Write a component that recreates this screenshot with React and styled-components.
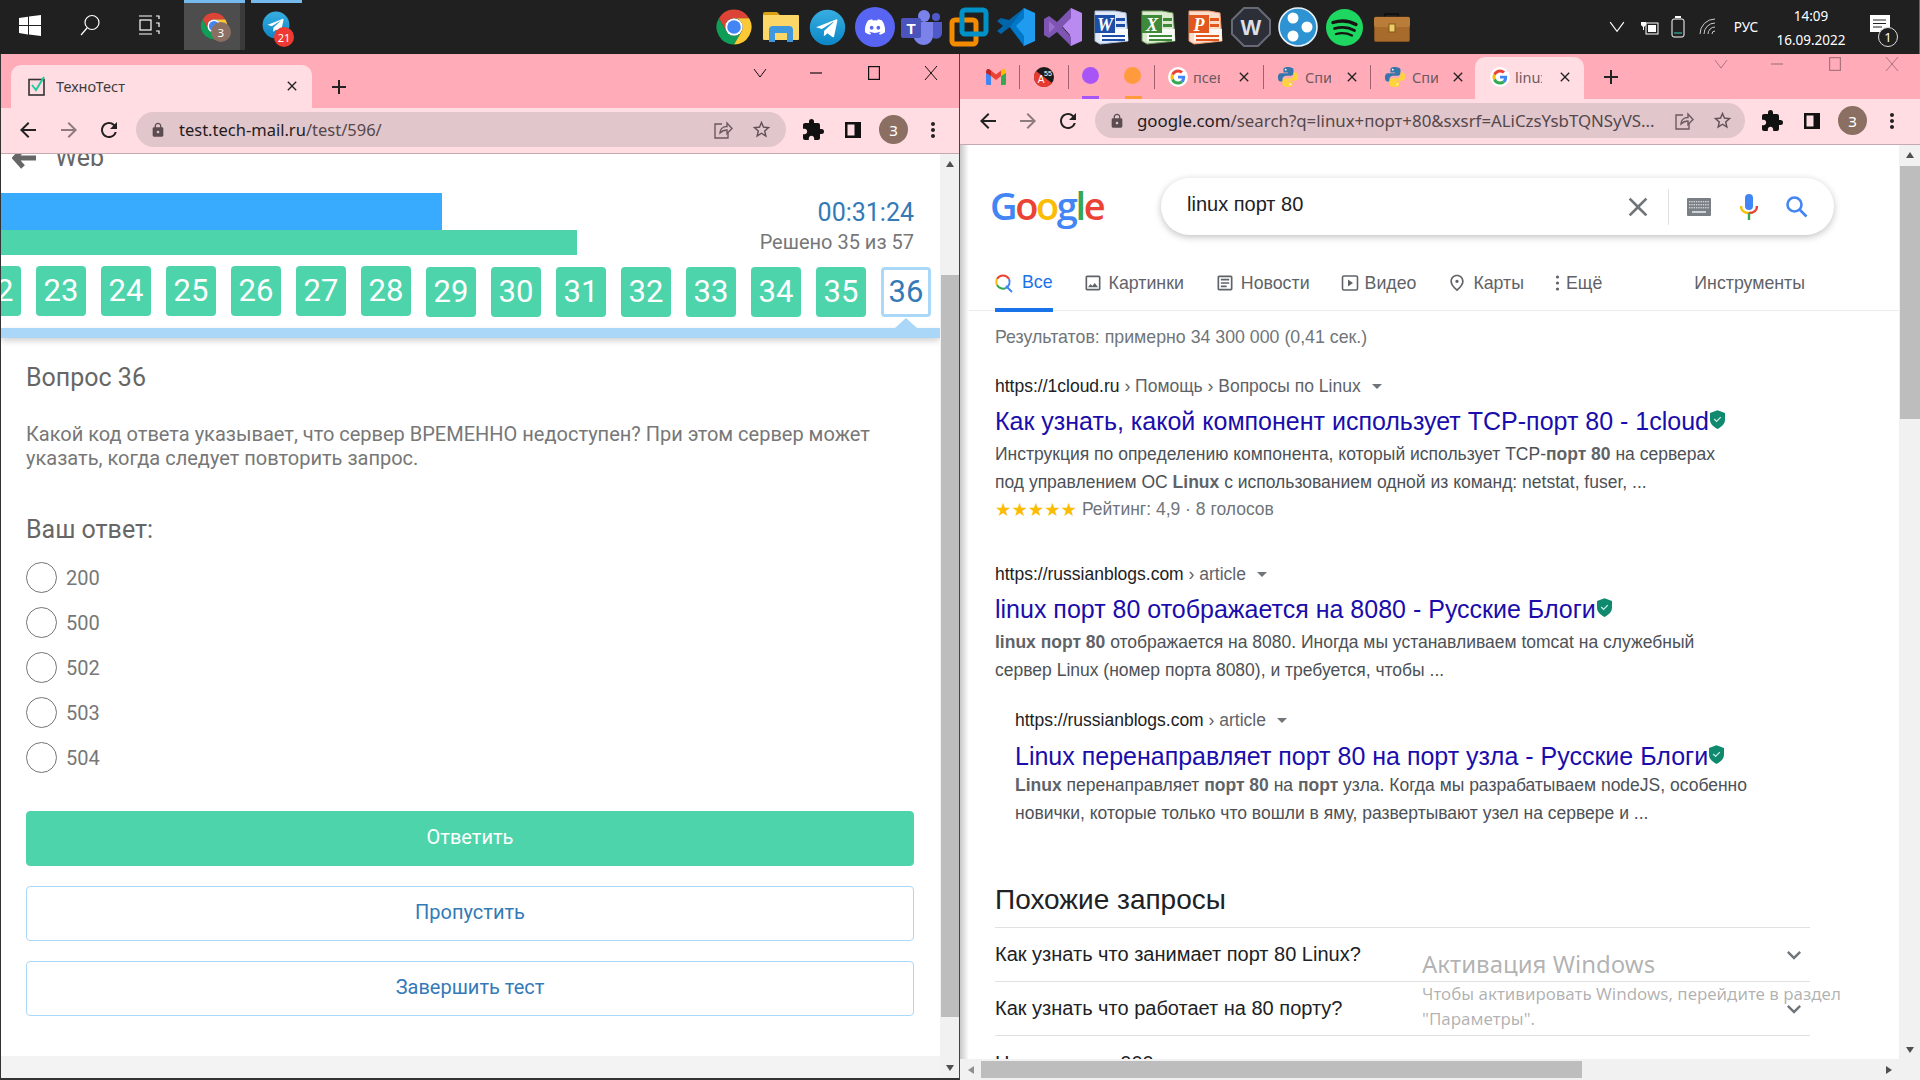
import React from 'react';
import styled, { createGlobalStyle } from 'styled-components';
import { MdArrowBack, MdArrowForward, MdRefresh, MdExtension, MdLock, MdMoreVert, MdClose, MdAdd, MdStarBorder, MdExpandMore, MdOutlineImage, MdOutlineArticle, MdOutlinePlace } from 'react-icons/md';
import { FaDiscord } from 'react-icons/fa';

const Global = createGlobalStyle`
  html, body { margin: 0; padding: 0; background: #fff; }
  * { box-sizing: border-box; }
`;
const UI = `"Noto Sans", "Open Sans", sans-serif`;
const ROBOTO = `Roboto, "Noto Sans", sans-serif`;
const ARIAL = `"Liberation Sans", Arial, sans-serif`;

const Page = styled.div`position: relative; width: 1920px; height: 1080px; overflow: hidden; display: flex; flex-direction: column; background: #fff;`;

/* ---------- taskbar ---------- */
const Taskbar = styled.div`height: 54px; flex: none; background: #202020; display: flex; color: #fff; font-family: ${UI};`;
const SysButton = styled.div`width: 60px; height: 54px; flex: none; display: flex; align-items: center; justify-content: center; padding-bottom: 4px;`;
const RunSlot = styled.div`
  position: relative; flex: none; height: 50px; width: ${p => p.$w}px; margin-left: ${p => p.$ml || 0}px;
  border-top: 3px solid #76b9ed; display: flex;
`;
const RunFace = styled.div`position: relative; width: ${p => p.$w}px; height: 47px; background: ${p => p.$active ? '#4d4d4d' : 'transparent'};`;
const RunRest = styled.div`flex: 1; background: #3a3a3a;`;
const RunIcon = styled.div`position: absolute; left: ${p => p.$l}px; top: 8px; width: 28px; height: 28px;`;
const Badge = styled.div`
  position: absolute; left: ${p => p.$l}px; top: ${p => p.$t}px; width: ${p => p.$s}px; height: ${p => p.$s}px; border-radius: 50%;
  background: ${p => p.$bg}; color: #fff; font: 11px ${UI}; display: flex; align-items: center; justify-content: center;
`;
const PinRow = styled.div`margin-left: 408px; display: flex; flex: none;`;
const Pin = styled.div`width: 47px; height: 54px; display: flex; align-items: center; justify-content: center;`;
const Tray = styled.div`flex: 1; display: flex; align-items: center; padding-left: 184px; border-right: 1px solid #666;`;
const TrayItem = styled.div`flex: none; width: ${p => p.$w}px; display: flex; justify-content: center; align-items: center; font-size: ${p => p.$fs || 14}px; line-height: 24px; text-align: center; flex-direction: column; padding-top: ${p => p.$pt || 0}px;`;
const NotifyWrap = styled.div`position: relative; width: 20px; height: 17px; margin-bottom: 8px;`;
const NotifyBadge = styled.div`position: absolute; left: 8px; top: 12px; width: 20px; height: 20px; border-radius: 50%; border: 1px solid #ddd; background: #202020; color: #fff; font-size: 13px; display: flex; align-items: center; justify-content: center;`;

/* ---------- windows ---------- */
const Windows = styled.div`flex: 1; min-height: 0; display: flex;`;
const Win = styled.div`width: 960px; flex: none; display: flex; flex-direction: column; min-height: 0; ${p => p.$framed && 'border-left: 1px solid #333; border-right: 1px solid #444; border-bottom: 2px solid #333;'}`;
const TabStrip = styled.div`height: ${p => p.$h}px; flex: none; background: #ffabb8; display: flex; align-items: flex-end; padding-left: ${p => p.$pl}px; position: relative; font-family: ${UI};`;
const ActiveTab = styled.div`
  position: relative; width: ${p => p.$w}px; height: ${p => p.$h}px; flex: none; background: #ffdde3; border-radius: 10px 10px 0 0;
  display: flex; align-items: center; padding: 0 0 2px ${p => p.$pl}px;
`;
const InactiveTab = styled.div`width: ${p => p.$w}px; height: 36px; flex: none; align-self: flex-end; margin-bottom: 4px; display: flex; align-items: center; padding-left: ${p => p.$pl || 14}px;`;
const TabTitle = styled.span`flex: ${p => p.$w ? 'none' : 1}; width: ${p => p.$w ? p.$w + 'px' : 'auto'}; min-width: 0; margin-left: ${p => p.$ml}px; font-size: 14.5px; color: ${p => p.$dim ? '#6d5a60' : '#3c3c3c'}; white-space: nowrap; overflow: hidden;`;
const TabClose = styled.div`flex: none; margin-left: auto; width: 16px; height: 16px; display: flex; align-items: center; justify-content: center; color: #222; margin-right: ${p => p.$mr}px; font-size: 16px;`;
const TabSep = styled.div`width: 1px; height: 24px; margin-bottom: 10px; flex: none; background: #a0616e;`;
const PinSlot = styled.div`position: relative; width: ${p => p.$w}px; height: 45px; flex: none; display: flex; align-items: center; justify-content: center;`;
const Dot = styled.div`position: relative; width: 17px; height: 17px; border-radius: 50%; background: ${p => p.$c}; margin-bottom: 2px;`;
const DotBar = styled.div`position: absolute; left: 50%; margin-left: -8px; bottom: 0; width: 17px; height: 3px; background: ${p => p.$c};`;
const NewTab = styled.div`width: 24px; height: 24px; margin-left: ${p => p.$ml}px; margin-bottom: ${p => p.$mb}px; flex: none; color: #222; font-size: 24px; display: flex; align-items: center; justify-content: center;`;
const Controls = styled.div`position: absolute; right: 0; top: ${p => p.$t}px; display: flex; align-items: center; opacity: ${p => p.$faded ? .35 : 1}; color: #111;`;
const Ctl = styled.div`width: ${p => p.$w}px; height: 20px; display: flex; align-items: center; justify-content: center;`;

const Toolbar = styled.div`height: 46px; flex: none; background: #ffdde3; border-bottom: 1px solid #c9a9b0; display: flex; align-items: center; padding-bottom: 2px; font-family: ${UI};`;
const NavBtn = styled.div`flex: none; width: ${p => p.$w}px; display: flex; align-items: center; justify-content: center; color: ${p => p.$dim ? '#8d7b80' : '#222'}; font-size: 24px;`;
const Omni = styled.div`flex: none; width: 650px; height: 35px; margin-left: ${p => p.$ml}px; border-radius: 18px; background: #e1c6cb; display: flex; align-items: center; padding: 0 ${p => p.$pr}px 0 14px; color: #5a4c50;`;
const Url = styled.div`flex: 1; min-width: 0; margin-left: ${p => p.$ml}px; font-size: ${p => p.$fs}px; white-space: nowrap; overflow: hidden; color: #54484b; b { font-weight: 400; color: #1f1b1c; }`;
const OmniIcon = styled.div`flex: none; width: 39px; display: flex; justify-content: center; font-size: 21px; color: #5f5053;`;
const Avatar = styled.div`flex: none; width: 29px; height: 29px; border-radius: 50%; background: #8a6f62; color: #fff; font-size: 15px; display: flex; align-items: center; justify-content: center;`;

/* ---------- viewport / scrollbars ---------- */
const Viewport = styled.div`flex: 1; min-height: 0; display: grid; grid-template-columns: minmax(0, 1fr) ${p => p.$sb}px; grid-template-rows: ${p => p.$hb ? 'minmax(0, 1fr) 21px' : 'minmax(0, 1fr)'};`;
const Scroll = styled.div`grid-column: 2; background: #f1f1f1; display: flex; flex-direction: column; align-items: stretch; min-height: 0; color: #505050; ${p => p.$tall && 'grid-row: 1 / span 2;'}`;
const Thumb = styled.div`flex: none; background: #bdbdbd; height: ${p => p.$h}px; margin-top: ${p => p.$mt}px; margin-left: 1px;`;
const Arrow = styled.div`flex: none; height: 20px; display: flex; align-items: center; justify-content: center; margin-top: ${p => p.$auto ? 'auto' : 0};`;
const Tri = styled.div`width: 0; height: 0; border-left: 4px solid transparent; border-right: 4px solid transparent; ${p => p.$up ? 'border-bottom: 6px solid #505050;' : 'border-top: 6px solid #505050;'}`;
const HScroll = styled.div`grid-column: 1; grid-row: 2; background: #f1f1f1; display: flex; align-items: center;`;
const HArrow = styled.div`flex: none; width: 21px; display: flex; justify-content: center; margin-left: ${p => p.$end ? 'auto' : 0};`;
const HTri = styled.div`width: 0; height: 0; border-top: 4px solid transparent; border-bottom: 4px solid transparent; ${p => p.$left ? 'border-right: 6px solid #909090;' : 'border-left: 6px solid #505050;'}`;
const HThumb = styled.div`flex: none; width: 601px; height: 17px; background: #bdbdbd;`;

/* ---------- test page ---------- */
const TestMain = styled.div`grid-column: 1; min-height: 0; overflow: hidden; display: flex; flex-direction: column; font-family: ${ROBOTO};`;
const BackRow = styled.div`height: 30px; margin-top: -11px; margin-left: 11px; display: flex; align-items: center; gap: 19px; flex: none; color: #666; font-size: 25px; line-height: 30px;`;
const ProgressWrap = styled.div`margin-top: 20px; display: grid; flex: none;`;
const Bars = styled.div`grid-area: 1 / 1; display: flex; flex-direction: column;`;
const Bar = styled.div`height: ${p => p.$h}px; background: ${p => p.$c};`;
const Stats = styled.div`grid-area: 1 / 1; padding: 5px 26px 0 0; display: flex; flex-direction: column; align-items: flex-end;`;
const Timer = styled.div`font-size: 25px; line-height: 30px; color: #337ab7;`;
const Solved = styled.div`font-size: 20px; line-height: 27px; padding-top: 1px; height: 27px; color: #777;`;
const TileRow = styled.div`margin: 11px 0 0 -30px; display: flex; gap: 15px; height: 51px; flex: none; align-items: flex-start;`;
const Tile = styled.div`
  flex: none; width: 50px; height: 50px; border-radius: 4px; font-size: 31px; display: flex; align-items: center; justify-content: center; padding-bottom: 2px;
  margin-top: ${p => p.$up ? 0 : 1}px;
  background: ${p => p.$current ? '#fff' : '#4dd4ab'}; color: ${p => p.$current ? '#337ab7' : '#fff'};
  border: ${p => p.$current ? '3px solid #a9d8f8' : 'none'};
`;
const Strip = styled.div`position: relative; margin-top: 11px; height: 10px; flex: none; background: #aad7f7; box-shadow: 0 3px 6px rgba(0,0,0,.18);`;
const Caret = styled.div`position: absolute; left: 894px; top: -10px; width: 0; height: 0; border-left: 11px solid transparent; border-right: 11px solid transparent; border-bottom: 10px solid #aad7f7;`;
const Body = styled.div`padding: 0 26px 0 25px; display: flex; flex-direction: column; flex: none;`;
const QTitle = styled.div`margin-top: 25px; font-size: 25px; line-height: 30px; color: #666;`;
const QText = styled.div`margin-top: 29px; font-size: 20px; line-height: 24px; color: #777;`;
const AnswerLabel = styled.div`margin-top: 45px; font-size: 25px; line-height: 30px; color: #666;`;
const Options = styled.div`margin-top: 17px; display: flex; flex-direction: column; gap: 14px;`;
const Option = styled.div`height: 31px; display: flex; align-items: center; gap: 9px; font-size: 20px; color: #777;`;
const Radio = styled.div`width: 31px; height: 31px; border-radius: 50%; border: 1px solid #767676; background: #fff; flex: none;`;
const Buttons = styled.div`margin-top: 38px; display: flex; flex-direction: column; gap: 20px;`;
const Btn = styled.div`
  height: 55px; border-radius: 4px; display: flex; align-items: center; justify-content: center; font-size: 20px; padding-bottom: 4px;
  background: ${p => p.$primary ? '#4dd4ab' : '#fff'}; color: ${p => p.$primary ? '#fff' : '#337ab7'};
  border: 1px solid ${p => p.$primary ? '#4dd4ab' : '#a9d8f8'};
`;
const BottomTrack = styled.div`margin-top: auto; height: 22px; flex: none; background: #f3f3f3;`;

/* ---------- google page ---------- */
const GMain = styled.div`grid-column: 1; grid-row: 1; position: relative; min-height: 0; overflow: hidden; display: flex; flex-direction: column; font-family: ${ARIAL}; background: #fff;`;
const EdgeShade = styled.div`position: absolute; left: 0; top: 0; bottom: 0; width: 9px; background: linear-gradient(90deg, #c8c8c8, #fff);`;
const SearchHead = styled.div`display: flex; padding: 33px 0 0 31px; flex: none;`;
const Logo = styled.div`width: 170px; flex: none; height: 57px; font-family: "Open Sans", ${ARIAL}; font-size: 38px; letter-spacing: -2.4px; line-height: 55px; font-weight: 600; margin-left: -1px;`;
const L = styled.span`color: ${p => p.$c};`;
const SearchBox = styled.div`width: 673px; height: 57px; border-radius: 29px; background: #fff; box-shadow: 0 2px 7px rgba(32,33,36,.28); display: flex; align-items: center; padding-left: 26px; flex: none; margin-left: 1px;`;
const Query = styled.div`flex: 1; font-size: 20px; color: #202124; padding-bottom: 4px;`;
const BoxIcon = styled.div`flex: none; width: ${p => p.$w}px; display: flex; justify-content: center; align-items: center; color: ${p => p.$c || '#70757a'};`;
const BoxDivider = styled.div`flex: none; width: 1px; height: 36px; background: #dfe1e5; margin: 0 11px 0 14px;`;
const TabsRow = styled.div`height: 54px; margin-top: 22px; padding-left: 35px; border-bottom: 1px solid #ebebeb; display: flex; flex: none; font-size: 17.75px; color: #5f6368;`;
const GTab = styled.div`display: flex; align-items: center; gap: ${p => p.$gap || 6}px; margin-right: ${p => p.$mr || 31}px; height: 54px; padding-bottom: 2px; ${p => p.$active && 'color: #1a73e8; border-bottom: 4px solid #1a73e8; padding-bottom: 0; height: 55px;'}`;
const Results = styled.div`padding-left: 35px; display: flex; flex-direction: column;`;
const ResStats = styled.div`margin-top: 16px; height: 20px; line-height: 20px; font-size: 17.75px; color: #70757a;`;
const ResItem = styled.div`margin-top: ${p => p.$mt}px; padding-left: ${p => p.$in || 0}px;`;
const Cite = styled.div`height: 22px; line-height: 22px; font-size: 17.5px; color: #202124; display: flex; align-items: center; span { color: #5f6368; }`;
const CiteTri = styled.div`width: 0; height: 0; margin-left: 11px; border-left: 5px solid transparent; border-right: 5px solid transparent; border-top: 5px solid #70757a;`;
const ResTitle = styled.div`margin-top: ${p => p.$mt}px; height: 30px; line-height: 30px; font-size: 25px; color: #1a0dab; display: flex; align-items: center; white-space: nowrap;`;
const Shield = styled.span`flex: none; display: flex; margin: -3px 0 0 1px;`;
const Snippet = styled.div`margin-top: ${p => p.$mt}px; font-size: 17.5px; line-height: 28px; color: #4d5156; white-space: nowrap; b { font-weight: 700; color: #5f6368; }`;
const Rating = styled.div`height: 26px; font-size: 17.5px; color: #70757a; display: flex; align-items: center; gap: 5px;`;
const Stars = styled.span`color: #fbbc04; font-size: 18.3px; font-family: "DejaVu Sans", sans-serif;`;
const Related = styled.div`margin-top: 55px; height: 36px; line-height: 36px; font-size: 28px; color: #202124;`;
const RelList = styled.div`margin-top: 9px; width: 815px;`;
const RelRow = styled.div`height: 54px; border-top: 1px solid #dfe1e5; display: flex; align-items: center; justify-content: space-between; font-size: 20px; color: #202124; padding: ${p => p.$clipped ? 2 : 0}px 2px 0 0;`;
const Activation = styled.div`position: absolute; left: 1422px; top: 946px; width: 480px; color: rgba(70,70,70,.42); font-family: ${UI}; pointer-events: none;`;
const ActTitle = styled.div`font-size: 24px; line-height: 35px;`;
const ActText = styled.div`font-size: 16.95px; line-height: 25px;`;

/* ---------- drawings ---------- */
const ChromeIcon = ({ s = 40 }) => (
  <svg width={s} height={s} viewBox="0 0 48 48">
    <path fill="#db4437" d="M5.81 13.5A21 21 0 0 1 42.19 13.5H24A10.5 10.5 0 0 0 14.9 29.25Z" />
    <path fill="#0f9d58" d="M5.81 13.5L14.9 29.25A10.5 10.5 0 0 0 33.1 29.25L24 45A21 21 0 0 1 5.81 13.5Z" />
    <path fill="#fcc934" d="M42.19 13.5A21 21 0 0 1 24 45L33.1 29.25A10.5 10.5 0 0 0 24 13.5Z" />
    <circle cx="24" cy="24" r="10.5" fill="#fff" /><circle cx="24" cy="24" r="8.2" fill="#4285f4" />
  </svg>
);
const Telegram = ({ s = 37 }) => (
  <svg width={s} height={s} viewBox="0 0 48 48">
    <defs><linearGradient id="tg" x1="0" y1="0" x2="0" y2="1"><stop offset="0" stopColor="#37aee2" /><stop offset="1" stopColor="#0c87c5" /></linearGradient></defs>
    <circle cx="24" cy="24" r="23" fill="url(#tg)" />
    <path fill="#fff" d="M10 23.5L35 13.5c1.2-.4 2.1.3 1.8 1.8l-4.2 20c-.3 1.3-1.2 1.6-2.2 1l-6.5-4.8-3.2 3c-.4.4-.9.7-1.5.6l.5-6.8 12.2-11c.5-.5-.1-.8-.8-.3L16.8 26l-6.5-2c-1.3-.4-1.3-.4-.3-.5z" />
  </svg>
);
const Folder = () => (
  <svg width="36" height="32" viewBox="0 0 36 32">
    <path fill="#d9a015" d="M0 3a2 2 0 0 1 2-2h12l4 4v3H0z" />
    <rect y="4" width="36" height="25" rx="1" fill="#fcd667" />
    <path fill="#3f97dd" d="M6 31V19a4 4 0 0 1 4-4h16a4 4 0 0 1 4 4v12h-6v-9H12v9z" />
  </svg>
);
const Discord = () => (
  <svg width="40" height="40" viewBox="0 0 40 40"><circle cx="20" cy="20" r="20" fill="#5865f2" /><g transform="translate(9 9)"><FaDiscord size={22} color="#fff" /></g></svg>
);
const Teams = () => (
  <svg width="41" height="36" viewBox="0 0 41 36">
    <circle cx="23" cy="7" r="6" fill="#7b83eb" /><circle cx="35" cy="8" r="4" fill="#5059c9" />
    <path fill="#5059c9" d="M28 13h13v11a6 6 0 0 1-9 5z" />
    <path fill="#7b83eb" d="M12 13h20v14a9 9 0 0 1-9 9 11 11 0 0 1-11-11z" />
    <rect y="9" width="20" height="20" rx="2" fill="#4b53bc" />
    <text x="10" y="25" fontFamily="Liberation Sans" fontSize="15" fontWeight="700" fill="#fff" textAnchor="middle">T</text>
  </svg>
);
const Vmware = () => (
  <svg width="40" height="40" viewBox="0 0 40 40" fill="none">
    <rect x="3" y="13" width="24" height="24" rx="3" stroke="#f38b00" strokeWidth="5" />
    <rect x="13" y="3" width="24" height="24" rx="3" stroke="#0091c8" strokeWidth="5" />
  </svg>
);
const VSCode = () => (
  <svg width="40" height="40" viewBox="0 0 40 40">
    <path fill="#1f9cf0" d="M28 1l11 5v28l-11 5-1-1V28L13 19l14-10V2z" />
    <path fill="#0078c9" d="M28 1L13 19l15 20 0-10-8-10 8-8z" />
    <path fill="#0065a9" d="M1 24l4 3 10-8 13-18L13 13 5 11l-4 3 6 5z" />
  </svg>
);
const VStudio = () => (
  <svg width="40" height="40" viewBox="0 0 40 40">
    <path fill="#b98aef" d="M28 1l11 5v28l-11 5-1-1V28l-8-9 8-9z" />
    <path fill="#7f55b3" d="M28 1L14 15 6 9l-5 3v16l5 3 8-6 14 14 0-9-9-10 9-9z" />
    <path fill="#9a6fd0" d="M6 14l6 6-6 6z" />
  </svg>
);
const OfficeDoc = ({ bg, stroke, letter, fg }) => (
  <svg width="40" height="40" viewBox="0 0 40 40">
    <path fill={bg} stroke={stroke} d="M5 4h20l11 2 2 28-28 3-5-3z" />
    <path fill="#fff" opacity=".8" d="M10 34l28 0 0-12-28 0z" />
    <rect x="5" y="8" width="20" height="18" fill={fg} />
    <text x="15" y="24" fontFamily="Liberation Serif" fontSize="18" fontWeight="700" fontStyle="italic" fill="#fff" textAnchor="middle">{letter}</text>
    <g fill={fg}><rect x="26" y="11" width="9" height="3" /><rect x="26" y="17" width="9" height="3" /><rect x="12" y="28" width="23" height="2" /><rect x="12" y="32" width="23" height="2" /></g>
  </svg>
);
const WShield = () => (
  <svg width="40" height="40" viewBox="0 0 40 40">
    <path fill="#2c2f38" stroke="#666a75" strokeWidth="2" d="M13 1h14l12 12v14L27 39H13L1 27V13z" />
    <text x="20" y="28" fontFamily="Liberation Sans" fontSize="22" fontWeight="700" fill="#dcdfe5" textAnchor="middle">W</text>
  </svg>
);
const BlueDots = () => (
  <svg width="40" height="40" viewBox="0 0 40 40">
    <circle cx="20" cy="20" r="19" fill="#2d93d3" stroke="#e7f3fb" strokeWidth="1.6" />
    <circle cx="15" cy="11" r="5.5" fill="#fff" /><circle cx="29" cy="20" r="5.5" fill="#fff" /><circle cx="15" cy="29" r="5.5" fill="#fff" />
  </svg>
);
const Spotify = () => (
  <svg width="37" height="37" viewBox="0 0 37 37" fill="none">
    <circle cx="18.5" cy="18.5" r="18.5" fill="#1ed760" />
    <path stroke="#191414" strokeLinecap="round" strokeWidth="3.4" d="M7 13.5c8-2.5 16-2 23 2" />
    <path stroke="#191414" strokeLinecap="round" strokeWidth="2.8" d="M8.5 19.5c7-2 14-1.5 20 2" />
    <path stroke="#191414" strokeLinecap="round" strokeWidth="2.3" d="M10 25c6-1.5 11-1 16 1.5" />
  </svg>
);
const Briefcase = () => (
  <svg width="36" height="30" viewBox="0 0 36 30">
    <path fill="none" stroke="#111" strokeWidth="2" d="M11 6V2h13v4" />
    <rect y="5" width="36" height="25" rx="2" fill="#a76c2b" stroke="#5d3812" />
    <rect y="5" width="36" height="10" rx="2" fill="#b97d39" />
    <rect x="15" y="12" width="6" height="8" fill="#f0cc6a" stroke="#7b5a14" />
  </svg>
);
const GoogleG = ({ s = 20 }) => (
  <svg width={s} height={s} viewBox="0 0 48 48" style={{ flex: 'none' }}>
    <circle cx="24" cy="24" r="24" fill="#fff" />
    <g transform="translate(6 6) scale(.75)">
      <path fill="#EA4335" d="M24 9.5c3.5 0 6.7 1.2 9.2 3.6l6.9-6.9C35.9 2.4 30.5 0 24 0 14.6 0 6.5 5.4 2.6 13.2l8 6.2C12.4 13.7 17.7 9.5 24 9.5z" />
      <path fill="#4285F4" d="M46.9 24.5c0-1.6-.2-3.1-.4-4.5H24v9h12.9c-.6 3-2.2 5.5-4.7 7.2l7.7 6c4.5-4.2 7-10.3 7-17.7z" />
      <path fill="#FBBC05" d="M10.5 28.6c-.5-1.4-.8-3-.8-4.6s.3-3.2.8-4.6l-8-6.2C1 16.5 0 20.1 0 24s1 7.5 2.6 10.8z" />
      <path fill="#34A853" d="M24 48c6.5 0 11.9-2.1 15.9-5.8l-7.7-6c-2.2 1.4-4.9 2.3-8.2 2.3-6.3 0-11.6-4.2-13.5-9.9l-8 6.2C6.5 42.6 14.6 48 24 48z" />
    </g>
  </svg>
);
const Python = () => (
  <svg width="22" height="24" viewBox="0 0 24 24" style={{ flex: 'none' }}>
    <path fill="#3776ab" d="M12 1C7 1 7 3 7 4v3h5v1H4C2 8 1 10 1 12.5S2 17 4 17h2v-3c0-2 2-3.5 4-3.5h5c1.5 0 3-1 3-3V4c0-2-3-3-6-3z" />
    <circle cx="9.5" cy="4" r="1" fill="#fff" />
    <path fill="#ffd43b" d="M12 23c5 0 5-2 5-3v-3h-5v-1h8c2 0 3-2 3-4.5S22 7 20 7h-2v3c0 2-2 3.5-4 3.5H9c-1.5 0-3 1-3 3V20c0 2 3 3 6 3z" />
    <circle cx="14.5" cy="20" r="1" fill="#fff" />
  </svg>
);
const Gmail = () => (
  <svg width="20" height="16" viewBox="0 0 20 16">
    <path fill="#4285f4" d="M0 3v11.5A1.5 1.5 0 0 0 1.5 16H5V7z" /><path fill="#34a853" d="M15 7v9h3.5a1.5 1.5 0 0 0 1.5-1.5V3z" />
    <path fill="#ea4335" d="M5 7V1.5L10 5.5 15 1.5V7L10 11z" /><path fill="#c5221f" d="M0 3v1l5 3V1.5L3 0C1.5-.6 0 1 0 3z" /><path fill="#fbbc04" d="M15 1.5V7l5-3V3c0-2-1.5-3.6-3-3z" />
  </svg>
);
const A55 = () => (
  <svg width="20" height="20" viewBox="0 0 20 20">
    <circle cx="10" cy="10" r="10" fill="#1b1b1b" /><path fill="#e53a30" d="M10 20A10 10 0 0 1 2 4l16 12a10 10 0 0 1-8 4z" />
    <text x="7" y="16" fontFamily="Liberation Sans" fontSize="10" fill="#fff" textAnchor="middle">A</text>
    <text x="14" y="9" fontFamily="Liberation Sans" fontSize="7" fill="#fff" textAnchor="middle">55</text>
  </svg>
);
const Favicon = () => (
  <svg width="20" height="20" viewBox="0 0 20 20" fill="none">
    <rect x="2" y="3.5" width="15" height="15.5" stroke="#333" strokeWidth="1.6" />
    <path d="M5 9l4 5 8-13" stroke="#24c9a0" strokeWidth="2" />
  </svg>
);
const Win10 = () => (
  <svg width="22" height="21" viewBox="0 0 22 21" fill="#fff"><path d="M0 3l9-1.3V10H0zM10 1.5L22 0v10H10zM0 11h9v8.5L0 18zM10 11h12v10l-12-1.6z" /></svg>
);
const SearchGlyph = () => (
  <svg width="22" height="22" viewBox="0 0 22 22" fill="none" stroke="#fff" strokeWidth="1.2"><circle cx="13" cy="8.5" r="7" /><path d="M8 14l-6 7" /></svg>
);
const TaskView = () => (
  <svg width="22" height="20" viewBox="0 0 22 20" fill="none" stroke="#fff" strokeWidth="1.2"><path d="M0 1h13M0 19h13" /><rect x="1" y="5" width="11" height="10" /><path d="M17 1h3v3M17 8h3v4M17 16h3v3" /></svg>
);
const Share = () => (
  <svg width="20" height="20" viewBox="0 0 20 20" fill="none" stroke="#6b5a5e" strokeWidth="1.4"><path d="M9 4H2v14h13v-5" /><path d="M7 13c0-4 3-6.5 7-6.5V3l5 5.5-5 5V10c-3 0-5 1-7 3z" /></svg>
);
const SidePanel = () => (
  <svg width="20" height="20" viewBox="0 0 20 20"><rect x="2" y="2" width="16" height="16" fill="#111" /><rect x="4.5" y="4.5" width="7" height="11" fill="#ffdde3" /></svg>
);
const BackArrow = () => (
  <svg width="24" height="22" viewBox="0 0 24 22" fill="none" stroke="#666" strokeWidth="5"><path d="M2 11h22M11 2l-8 9 8 9" /></svg>
);
const ShieldIcon = () => (
  <svg width="15" height="19" viewBox="0 0 16 20"><path fill="#0f8a6f" d="M8 0l8 3v7c0 5-4 8-8 10-4-2-8-5-8-10V3z" /><path d="M4.5 9.5l2.5 2.5 4.5-4.5" stroke="#cdeee4" strokeWidth="1.4" fill="none" /></svg>
);
const Keyboard = () => (
  <svg width="24" height="18" viewBox="0 0 24 18"><rect width="24" height="18" rx="1" fill="#7a7f85" /><g fill="#cfd2d5">{[0,1,2,3,4,5,6,7,8].map(i => <rect key={i} x={2+i*2.3} y="3" width="1.4" height="1.4" />)}{[0,1,2,3,4,5,6,7,8].map(i => <rect key={'b'+i} x={2+i*2.3} y="6" width="1.4" height="1.4" />)}{[0,1,2,3,4,5,6,7,8].map(i => <rect key={'c'+i} x={2+i*2.3} y="9" width="1.4" height="1.4" />)}<rect x="5" y="13" width="14" height="2" /></g></svg>
);
const Mic = () => (
  <svg width="18" height="26" viewBox="0 0 18 26" fill="none"><rect x="5" y="0" width="8" height="16" rx="4" fill="#4285f4" /><path d="M1 12c0 4 3 7 8 7" stroke="#fbbc04" strokeWidth="2.4" /><path d="M17 12c0 4-3 7-8 7" stroke="#ea4335" strokeWidth="2.4" /><path d="M9 19v7" stroke="#34a853" strokeWidth="2.4" /></svg>
);
const SearchBlue = () => (
  <svg width="24" height="24" viewBox="0 0 24 24" fill="none" stroke="#4285f4" strokeWidth="2.6"><circle cx="9.5" cy="9.5" r="7" /><path d="M14.5 14.5l7 7" /></svg>
);
const MultiQ = () => (
  <svg width="18" height="20" viewBox="0 0 18 20" fill="none" strokeWidth="2"><path stroke="#ea4335" d="M2 6a7 7 0 0 1 12 0" /><path stroke="#fbbc04" d="M2 6a7 7 0 0 0 0 6" /><path stroke="#34a853" d="M2 12a7 7 0 0 0 9 3" /><path stroke="#4285f4" d="M14 6a7 7 0 0 1-3 9M11 13l6 6" /></svg>
);
const Dots3 = () => (
  <svg width="5" height="18" viewBox="0 0 5 18" fill="#5f6368"><circle cx="2.5" cy="3" r="1.6" /><circle cx="2.5" cy="9" r="1.6" /><circle cx="2.5" cy="15" r="1.6" /></svg>
);
const VideoGlyph = () => (
  <svg width="18" height="18" viewBox="0 0 18 18" fill="none" stroke="#5f6368" strokeWidth="1.6"><rect x="1.5" y="2" width="15" height="14" rx="1.5" /><path d="M7 5.5l5 3.5-5 3.5z" fill="#5f6368" stroke="none" /></svg>
);
const Maximize = () => <svg width="12" height="14" viewBox="0 0 12 14" fill="none" stroke="currentColor" strokeWidth="1.2"><rect x=".6" y=".6" width="10.8" height="12.8" /></svg>;
const Minim = () => <svg width="12" height="12" viewBox="0 0 12 12" stroke="currentColor" strokeWidth="1.2"><path d="M0 6h12" /></svg>;
const CloseX = () => <svg width="14" height="16" viewBox="0 0 14 16" fill="none" stroke="currentColor" strokeWidth="1"><path d="M1 1l12 14M13 1L1 15" /></svg>;
const Chev = ({ s = 14 }) => <svg width={s} height={s * 0.72} viewBox="0 0 14 10" fill="none" stroke="currentColor" strokeWidth="1"><path d="M1 1l6 8 6-8" /></svg>;
const TrayPlug = () => <svg width="20" height="20" viewBox="0 0 20 20" fill="#fff"><path d="M3 1v4M6 1v4M2 5h5v3l-2 2v3H4v-3L2 8z" /><rect x="7" y="6" width="12" height="11" fill="none" stroke="#fff" /><rect x="9" y="8" width="8" height="7" /></svg>;
const TrayPhone = () => <svg width="14" height="22" viewBox="0 0 14 22" fill="none" stroke="#fff"><rect x="1" y="3" width="12" height="18" rx="2" /><path d="M4 1h6" strokeWidth="2" /><path d="M3 17h8" stroke="#39d0c0" /></svg>;
const TrayWifi = () => <svg width="18" height="18" viewBox="0 0 18 18" fill="none" stroke="#ccc"><path d="M1 16A15 15 0 0 1 16 1M5 16A11 11 0 0 1 16 5M9 16a7 7 0 0 1 7-7" /><path d="M13 16a3 3 0 0 1 3-3" /></svg>;
const Notify = () => <svg width="20" height="17" viewBox="0 0 20 17"><rect width="20" height="17" fill="#fff" /><path d="M3 5h13M3 8.5h13M3 12h9" stroke="#222" /></svg>;

const tiles = [22,23,24,25,26,27,28,29,30,31,32,33,34,35,36];
const pins = [<ChromeIcon key="c" />, <Folder key="f" />, <Telegram key="t" />, <Discord key="d" />, <Teams key="te" />, <Vmware key="v" />, <VSCode key="vs" />, <VStudio key="vst" />,
  <OfficeDoc key="w" bg="#dfe9f7" stroke="#a7bedd" letter="W" fg="#1d4fa8" />, <OfficeDoc key="x" bg="#dcebd0" stroke="#6ea158" letter="X" fg="#3f8a3a" />, <OfficeDoc key="p" bg="#fbdccb" stroke="#f09a6a" letter="P" fg="#e2571e" />,
  <WShield key="ws" />, <BlueDots key="b" />, <Spotify key="s" />, <Briefcase key="br" />];

const WinControls = ({ top, faded }) => (
  <Controls $t={top} $faded={faded}>
    <Ctl $w={52}><Chev /></Ctl><Ctl $w={60}><Minim /></Ctl><Ctl $w={56}><Maximize /></Ctl><Ctl $w={57}><CloseX /></Ctl>
  </Controls>
);

const TrailingTools = () => (
  <>
    <NavBtn $w={6} />
    <NavBtn $w={41}><MdExtension size={24} color="#111" /></NavBtn>
    <NavBtn $w={40}><SidePanel /></NavBtn>
    <NavBtn $w={41}><Avatar>З</Avatar></NavBtn>
    <NavBtn $w={38}><MdMoreVert size={24} /></NavBtn>
  </>
);

export default function App() {
  return (
    <Page>
      <Global />
      <Taskbar>
        <SysButton><Win10 /></SysButton>
        <SysButton><SearchGlyph /></SysButton>
        <SysButton><TaskView /></SysButton>
        <RunSlot $w={61} $ml={4}>
          <RunFace $active $w={56}>
            <RunIcon $l={15}><ChromeIcon s={30} /></RunIcon>
            <Badge $l={27} $t={19} $s={20} $bg="#8a6f62">З</Badge>
          </RunFace>
          <RunRest />
        </RunSlot>
        <RunSlot $w={51} $ml={6}>
          <RunIcon $l={11}><Telegram s={28} /></RunIcon>
          <Badge $l={23} $t={24} $s={20} $bg="#ef3a34">21</Badge>
        </RunSlot>
        <PinRow>{pins.map((p, i) => <Pin key={i}>{p}</Pin>)}</PinRow>
        <Tray>
          <TrayItem $w={36}><Chev s={16} /></TrayItem>
          <TrayItem $w={28}><TrayPlug /></TrayItem>
          <TrayItem $w={30}><TrayPhone /></TrayItem>
          <TrayItem $w={30}><TrayWifi /></TrayItem>
          <TrayItem $w={46} $fs={13.5}>РУС</TrayItem>
          <TrayItem $w={84} $fs={13.5} $pt={2}><span>14:09</span><span>16.09.2022</span></TrayItem>
          <TrayItem $w={54}><NotifyWrap><Notify /><NotifyBadge>1</NotifyBadge></NotifyWrap></TrayItem>
        </Tray>
      </Taskbar>
      <Windows>
        <Win $framed>
          <TabStrip $h={54} $pl={10}>
            <ActiveTab $w={301} $h={43} $pl={16}>
              <Favicon />
              <TabTitle $ml={9}>ТехноТест</TabTitle>
              <TabClose $mr={12}><MdClose /></TabClose>
            </ActiveTab>
            <NewTab $ml={15} $mb={9}><MdAdd /></NewTab>
            <WinControls top={9} />
          </TabStrip>
          <Toolbar>
            <NavBtn $w={54}><MdArrowBack /></NavBtn>
            <NavBtn $w={28} $dim><MdArrowForward /></NavBtn>
            <NavBtn $w={52}><MdRefresh /></NavBtn>
            <Omni $ml={1} $pr={5}>
              <MdLock size={16} />
              <Url $ml={13} $fs={16.5}><b>test.tech-mail.ru</b>/test/596/</Url>
              <OmniIcon><Share /></OmniIcon>
              <OmniIcon><MdStarBorder /></OmniIcon>
            </Omni>
            <TrailingTools />
          </Toolbar>
          <Viewport $sb={19}>
            <TestMain>
              <BackRow><BackArrow />Web</BackRow>
              <ProgressWrap>
                <Bars>
                  <Bar $h={37} $c="#38abff" style={{ width: `${(441 / 939) * 100}%` }} />
                  <Bar $h={25} $c="#4dd4ab" style={{ width: `${(35 / 57) * 100 - 0.1}%` }} />
                </Bars>
                <Stats>
                  <Timer>00:31:24</Timer>
                  <Solved>Решено 35 из 57</Solved>
                </Stats>
              </ProgressWrap>
              <TileRow>
                {tiles.map(n => <Tile key={n} $up={n <= 28} $current={n === 36}>{n}</Tile>)}
              </TileRow>
              <Strip><Caret /></Strip>
              <Body>
                <QTitle>Вопрос 36</QTitle>
                <QText>Какой код ответа указывает, что сервер ВРЕМЕННО недоступен? При этом сервер может указать, когда следует повторить запрос.</QText>
                <AnswerLabel>Ваш ответ:</AnswerLabel>
                <Options>
                  {[200, 500, 502, 503, 504].map(v => <Option key={v}><Radio />{v}</Option>)}
                </Options>
                <Buttons>
                  <Btn $primary>Ответить</Btn>
                  <Btn>Пропустить</Btn>
                  <Btn>Завершить тест</Btn>
                </Buttons>
              </Body>
              <BottomTrack />
            </TestMain>
            <Scroll>
              <Arrow><Tri $up /></Arrow>
              <Thumb $mt={101} $h={742} />
              <Arrow $auto><Tri /></Arrow>
            </Scroll>
          </Viewport>
        </Win>
        <Win>
          <TabStrip $h={45} $pl={12}>
            <PinSlot $w={47}><Gmail /></PinSlot><TabSep />
            <PinSlot $w={48}><A55 /></PinSlot><TabSep />
            <PinSlot $w={42}><Dot $c="#a855f7" /><DotBar $c="#a855f7" /></PinSlot>
            <PinSlot $w={43}><Dot $c="#ff9a3d" /><DotBar $c="#ff9a3d" /></PinSlot><TabSep />
            <InactiveTab $w={108} $pl={13}><GoogleG /><TabTitle $ml={5} $w={27} $dim>псевдо</TabTitle><TabClose $mr={11}><MdClose /></TabClose></InactiveTab><TabSep />
            <InactiveTab $w={106} $pl={13}><Python /><TabTitle $ml={6} $w={26} $dim>Список</TabTitle><TabClose $mr={10}><MdClose /></TabClose></InactiveTab><TabSep />
            <InactiveTab $w={104} $pl={13}><Python /><TabTitle $ml={6} $w={26} $dim>Список</TabTitle><TabClose $mr={9}><MdClose /></TabClose></InactiveTab>
            <ActiveTab $w={109} $h={42} $pl={15}>
              <GoogleG /><TabTitle $ml={5} $w={27} $dim>linux порт</TabTitle><TabClose $mr={11}><MdClose /></TabClose>
            </ActiveTab>
            <NewTab $ml={15} $mb={10}><MdAdd /></NewTab>
            <WinControls top={0} faded />
          </TabStrip>
          <Toolbar>
            <NavBtn $w={56}><MdArrowBack /></NavBtn>
            <NavBtn $w={24} $dim><MdArrowForward /></NavBtn>
            <NavBtn $w={55}><MdRefresh /></NavBtn>
            <Omni $ml={0} $pr={3}>
              <MdLock size={16} />
              <Url $ml={12} $fs={16.85}><b>google.com</b>/search?q=linux+порт+80&sxsrf=ALiCzsYsbTQNSyVS...</Url>
              <OmniIcon><Share /></OmniIcon>
              <OmniIcon><MdStarBorder /></OmniIcon>
            </Omni>
            <TrailingTools />
          </Toolbar>
          <Viewport $sb={21} $hb>
            <GMain>
              <EdgeShade />
              <SearchHead>
                <Logo><L $c="#4285f4">G</L><L $c="#ea4335">o</L><L $c="#fbbc05">o</L><L $c="#4285f4">g</L><L $c="#34a853">l</L><L $c="#ea4335">e</L></Logo>
                <SearchBox>
                  <Query>linux порт 80</Query>
                  <BoxIcon $w={32}><MdClose size={32} /></BoxIcon>
                  <BoxDivider />
                  <BoxIcon $w={38}><Keyboard /></BoxIcon>
                  <BoxIcon $w={62}><Mic /></BoxIcon>
                  <BoxIcon $w={34}><SearchBlue /></BoxIcon>
                  <BoxIcon $w={20} />
                </SearchBox>
              </SearchHead>
              <TabsRow>
                <GTab $active $gap={9} $mr={30}><MultiQ />Все</GTab>
                <GTab><MdOutlineImage size={20} />Картинки</GTab>
                <GTab><MdOutlineArticle size={20} />Новости</GTab>
                <GTab><VideoGlyph />Видео</GTab>
                <GTab><MdOutlinePlace size={20} />Карты</GTab>
                <GTab $mr={92}><Dots3 />Ещё</GTab>
                <GTab>Инструменты</GTab>
              </TabsRow>
              <Results>
                <ResStats>Результатов: примерно 34 300 000 (0,41 сек.)</ResStats>
                <ResItem $mt={28}>
                  <Cite>https://1cloud.ru<span>&nbsp;› Помощь › Вопросы по Linux</span><CiteTri /></Cite>
                  <ResTitle $mt={9}>Как узнать, какой компонент использует TCP-порт 80 - 1cloud<Shield><ShieldIcon /></Shield></ResTitle>
                  <Snippet $mt={4}>Инструкция по определению компонента, который использует TCP-<b>порт 80</b> на серверах<br />под управлением ОС <b>Linux</b> с использованием одной из команд: netstat, fuser, ...</Snippet>
                  <Rating><Stars>★★★★★</Stars>Рейтинг: 4,9 · 8 голосов</Rating>
                </ResItem>
                <ResItem $mt={41}>
                  <Cite>https://russianblogs.com<span>&nbsp;› article</span><CiteTri /></Cite>
                  <ResTitle $mt={9}>linux порт 80 отображается на 8080 - Русские Блоги<Shield><ShieldIcon /></Shield></ResTitle>
                  <Snippet $mt={4}><b>linux порт 80</b> отображается на 8080. Иногда мы устанавливаем tomcat на служебный<br />сервер Linux (номер порта 8080), и требуется, чтобы ...</Snippet>
                </ResItem>
                <ResItem $mt={25} $in={20}>
                  <Cite>https://russianblogs.com<span>&nbsp;› article</span><CiteTri /></Cite>
                  <ResTitle $mt={10}>Linux перенаправляет порт 80 на порт узла - Русские Блоги<Shield><ShieldIcon /></Shield></ResTitle>
                  <Snippet $mt={0}><b>Linux</b> перенаправляет <b>порт 80</b> на <b>порт</b> узла. Когда мы разрабатываем nodeJS, особенно<br />новички, которые только что вошли в яму, развертывают узел на сервере и ...</Snippet>
                </ResItem>
                <Related>Похожие запросы</Related>
                <RelList>
                  <RelRow>Как узнать что занимает порт 80 Linux?<MdExpandMore size={28} color="#70757a" /></RelRow>
                  <RelRow>Как узнать что работает на 80 порту?<MdExpandMore size={28} color="#70757a" /></RelRow>
                  <RelRow $clipped>Номер порта 000<MdExpandMore size={28} color="#70757a" /></RelRow>
                </RelList>
              </Results>
            </GMain>
            <Scroll $tall>
              <Arrow><Tri $up /></Arrow>
              <Thumb $mt={1} $h={253} />
              <Arrow $auto><Tri /></Arrow>
              <Arrow />
            </Scroll>
            <HScroll>
              <HArrow><HTri $left /></HArrow>
              <HThumb />
              <HArrow $end><HTri /></HArrow>
            </HScroll>
          </Viewport>
        </Win>
      </Windows>
      <Activation>
        <ActTitle>Активация Windows</ActTitle>
        <ActText>Чтобы активировать Windows, перейдите в раздел<br />"Параметры".</ActText>
      </Activation>
    </Page>
  );
}
